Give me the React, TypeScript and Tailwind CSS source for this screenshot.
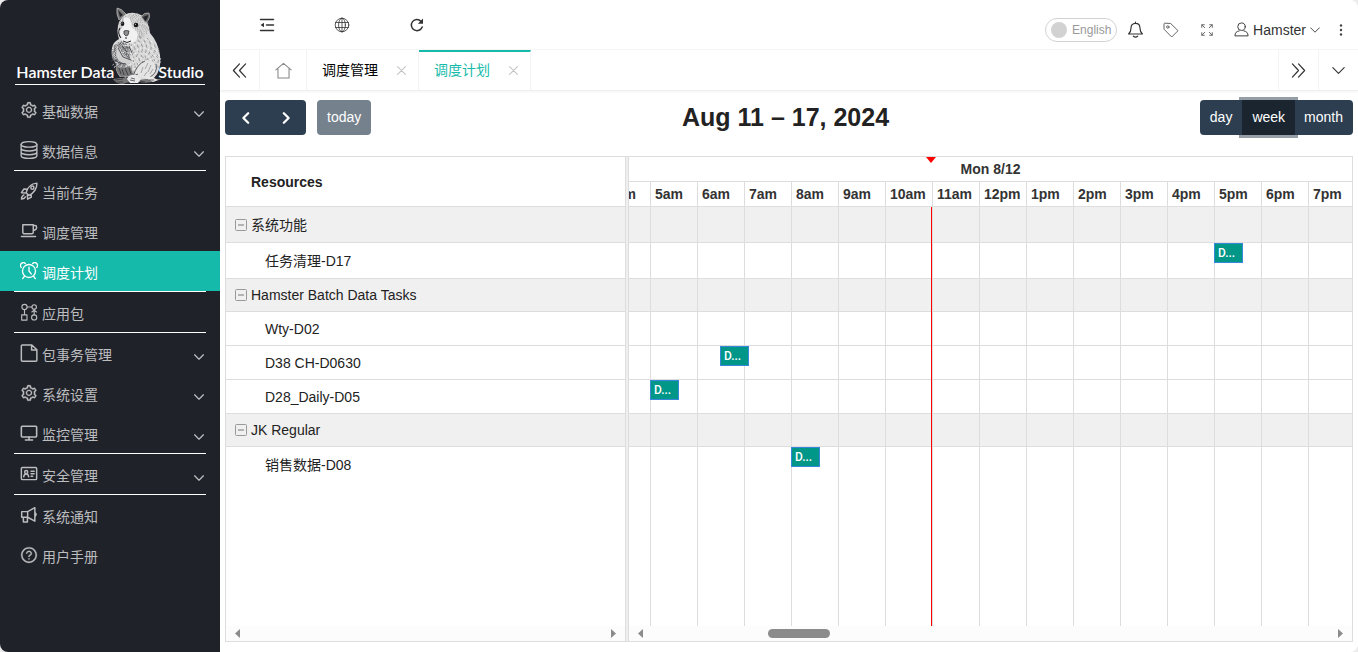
import { useState } from 'react';
import type { ReactNode } from 'react';
import { AiOutlineQuestionCircle, AiOutlineSetting } from 'react-icons/ai';

type IconProps = {
  children: ReactNode;
  className?: string;
  width?: number;
};

type MenuItem = {
  label: string;
  icon: ReactNode;
  expandable?: boolean;
  active?: boolean;
};

type Row = {
  name: string;
  group?: boolean;
  height: string;
  event?: { hour: number; half?: boolean; title: string };
};

const Icon = ({ children, className = 'size-[18px]', width = 1.2 }: IconProps) => (
  <svg
    viewBox="0 0 16 16"
    fill="none"
    stroke="currentColor"
    strokeWidth={width}
    strokeLinecap="round"
    strokeLinejoin="round"
    className={className}
    aria-hidden="true"
  >
    {children}
  </svg>
);

const GearIcon = () => (
  <AiOutlineSetting className="size-[18px]" stroke="currentColor" strokeWidth={16} />
);

const menu: MenuItem[][] = [
  [
    { label: '基础数据', icon: <GearIcon />, expandable: true },
    {
      label: '数据信息',
      expandable: true,
      icon: (
        <Icon>
          <ellipse cx="8" cy="3" rx="7" ry="2.4" />
          <path d="M1 3v10c0 1.3 3.1 2.4 7 2.4s7-1.1 7-2.4V3M1 6.5c0 1.3 3.1 2.4 7 2.4s7-1.1 7-2.4M1 9.8c0 1.3 3.1 2.4 7 2.4s7-1.1 7-2.4" />
        </Icon>
      ),
    },
  ],
  [
    {
      label: '当前任务',
      icon: (
        <Icon width={1.3}>
          <path d="M5.500 9.500C6.500 5 9.500 1.500 15 1c.2 5-2.800 8.500-7 11zM6.300 6.500L3.500 6.200 1.300 9.500l4.200.3M9.800 10.800l.3 2.700-3.300 1.800L6.500 11.500M3.500 11.500q-2 .8-2.200 3.700 2.800-.2 3.500-2" />
          <circle cx="11" cy="5" r="1.400" />
        </Icon>
      ),
    },
    {
      label: '调度管理',
      icon: (
        <Icon width={1.3}>
          <path d="M2.500 2.500h9.300v6.700a1.300 1.300 0 0 1-1.300 1.300H3.800a1.300 1.300 0 0 1-1.300-1.300zM11.800 3.200h1.600q1.300 0 1.300 1.300v.8q0 1.600-2.900 2.200M1.300 12.800h12.500" />
        </Icon>
      ),
    },
    {
      label: '调度计划',
      active: true,
      icon: (
        <Icon>
          <circle cx="8" cy="8" r="5.8" />
          <path d="M8 4.500V8l2 2.600M1.100 4.800A2.500 2.500 0 0 1 4.700 1.300M14.900 4.800a2.500 2.500 0 0 0-3.600-3.500M4 12.500l-1.600 2.300M12 12.500l1.600 2.300" />
        </Icon>
      ),
    },
  ],
  [
    {
      label: '应用包',
      icon: (
        <Icon width={1}>
          <circle cx="4" cy="3.500" r="2.300" />
          <circle cx="12.600" cy="3.500" r="2" />
          <circle cx="12.600" cy="12.800" r="2.300" />
          <path d="M1.500 10.500h4.700v4.700H1.500zM6.500 3.500h4M4 6v4.500M12.600 5.600v4.800M10.500 8l2.100-1.500L14.700 8" />
        </Icon>
      ),
    },
  ],
  [
    {
      label: '包事务管理',
      expandable: true,
      icon: (
        <Icon width={1.3}>
          <path d="M2 .8h8.500L15 5.200v9.300a.8.8 0 0 1-.8.800H2a.8.800 0 0 1-.8-.8V1.600A.8.800 0 0 1 2 .8zM10.300 1v4.400h4.500" />
        </Icon>
      ),
    },
    { label: '系统设置', icon: <GearIcon />, expandable: true },
    {
      label: '监控管理',
      expandable: true,
      icon: (
        <Icon width={1.4}>
          <rect x="1.200" y="2" width="13.600" height="9.500" rx=".8" />
          <path d="M8 11.500V14M4.800 14.200h6.400" />
        </Icon>
      ),
    },
  ],
  [
    {
      label: '安全管理',
      expandable: true,
      icon: (
        <Icon width={1.3}>
          <rect x="1.200" y="2.200" width="13.600" height="10.800" rx="1" />
          <circle cx="5.500" cy="6.200" r="1.400" />
          <path d="M3.300 10.500q.3-2.500 2.200-2.500t2.200 2.500M9.800 5.500h2.800M9.800 7.700h2.800M9.800 10h1.500" />
        </Icon>
      ),
    },
  ],
  [
    {
      label: '系统通知',
      icon: (
        <Icon width={1.3}>
          <path d="M1.500 5h5.300l6.400-3.500v12L6.800 10H1.500zM6.800 5v5M3 10v4.200h3.600V10M13.500 6q1.600 1.300 0 3" />
        </Icon>
      ),
    },
    {
      label: '用户手册',
      icon: <AiOutlineQuestionCircle className="size-[18px]" stroke="currentColor" strokeWidth={16} />,
    },
  ],
];

const rows: Row[] = [
  { name: '系统功能', group: true, height: 'h-[36px]' },
  { name: '任务清理-D17', height: 'h-[36px]', event: { hour: 17, title: 'D...' } },
  { name: 'Hamster Batch Data Tasks', group: true, height: 'h-[33px]' },
  { name: 'Wty-D02', height: 'h-[34px]' },
  { name: 'D38 CH-D0630', height: 'h-[34px]', event: { hour: 6, half: true, title: 'D...' } },
  { name: 'D28_Daily-D05', height: 'h-[34px]', event: { hour: 5, title: 'D...' } },
  { name: 'JK Regular', group: true, height: 'h-[33px]' },
  { name: '销售数据-D08', height: 'h-[36px]', event: { hour: 8, title: 'D...' } },
];

const hours = Array.from({ length: 16 }, (_, i) => i + 4);

const hourLabel = (h: number) => `${h > 12 ? h - 12 : h}${h < 12 ? 'am' : 'pm'}`;

// short strokes spread over an ellipse, in a sunflower pattern
const strokes = (n: number, cx: number, cy: number, rx: number, ry: number) =>
  Array.from({ length: n }, (_, i) => {
    const a = i * 2.39996;
    const r = Math.sqrt((i + 0.5) / n);
    const x = cx + Math.cos(a) * r * rx;
    const y = cy + Math.sin(a) * r * ry;
    const dx = (x - cx) * 0.06 + ((i * 7) % 5) * 0.2 - 0.4;
    return `M${x.toFixed(1)} ${y.toFixed(1)}l${dx.toFixed(1)} ${(1 + (i % 3) * 0.5).toFixed(1)}`;
  });

const fur = strokes(460, 134, 57, 24, 22);
const headFur = strokes(150, 132, 26, 15, 13);
const chestFur = strokes(150, 119, 54, 9, 13);

const Hamster = () => (
  <svg viewBox="108 6 54 78" className="h-[78px] w-[54px]" aria-hidden="true">
    <path d="M111 79q12-2 22-1t27 1l-6 2q-10 3-16 1t-14 1-13-4z" fill="#777" />
    <path
      d="M122 15Q131 10 141 16Q147 23 148 33Q156 42 158 55Q160 70 152 78L136 80L128 77L118 77Q113 71 114 64Q108 57 110 48Q111 42 117 39Q114 31 117 22z"
      fill="#dadada"
    />
    <g fill="none" strokeWidth=".6">
      <path d={fur.filter((_, i) => i % 2 === 0).join('')} stroke="#6b6b6b" />
      <path d={fur.filter((_, i) => i % 3 === 0).join('')} stroke="#fff" strokeWidth=".8" />
      <path d={headFur.join('')} stroke="#8a8a8a" />
      <path d={chestFur.join('')} stroke="#3d3f45" strokeWidth=".7" />
    </g>
    <path d="M117 20q-3-6-2-12 4 0 9 6l-3 3z" fill="#777" stroke="#ccc" strokeWidth=".6" />
    <path d="M116 10l5 5-3 2z" fill="#24262c" />
    <path d="M139 17q3-5 8-4 2 5-3 10z" fill="#666" stroke="#ccc" strokeWidth=".6" />
    <path d="M141 17l5-2q0 4-3 6z" fill="#24262c" />
    <path d="M122 18q3-2 6 1l2 8 5 5q2 8-4 11h-8q-7-3-6-11l4-5z" fill="#f1f1f1" />
    <ellipse cx="120.500" cy="23.700" rx="1.800" ry="2.200" fill="#17181c" />
    <circle cx="134" cy="25" r="2.300" fill="#17181c" />
    <circle cx="120" cy="23" r=".5" fill="#fff" />
    <circle cx="133.400" cy="24.200" r=".5" fill="#fff" />
    <path d="M118 28q-3 5 1 10" fill="none" stroke="#24262c" strokeWidth="1.100" />
    <path d="M122 31q2-1 5 0l-1 4-2 1-2-2z" fill="#8f8f8f" stroke="#33353b" strokeWidth=".8" />
    <path d="M124 37v2m-3 2q4 3 8 0" fill="none" stroke="#24262c" strokeWidth="1" />
    <path d="M115 46q5 5 7 10l7 4q1 4-5 4-8-2-10-9z" fill="#d0d0d0" />
    <path d="M116 48l5 9 8 3M112 60l6 3 6 1M120 46l5 6M127 46l3 7" fill="none" stroke="#33353b" strokeWidth=".8" />
    <path d="M114 66q6 3 14 0l4 10-13 1q-5-4-5-11z" fill="#777" />
    <path d="M117 68l2 6M120 69l2 6M123 68l3 7M127 68l2 6" stroke="#33353b" strokeWidth=".8" />
    <path d="M133 76q1-13 11-15 9-2 10 8 0 8-9 10z" fill="#e4e4e4" />
    <path d="M143 61q-8 3-12 15M154 64q2 9-6 13M136 74l-7 3" fill="none" stroke="#4a4c52" strokeWidth=".9" />
    <path d="M146 63l-3 6M149 65l-3 7M151 69l-3 5M141 67l-2 6M145 72l-3 4" stroke="#888" strokeWidth=".7" />
    <path d="M125 79q2-5 9-4l5 4-3 4h-8zM144 78q4-3 8 0l4 2-5 2z" fill="#e8e8e8" />
    <path d="M128 80l5 1M129 78l4 1M147 80h5M113 80l8-1M115 82h6M138 81l5 1" stroke="#2b2d33" strokeWidth=".7" />
  </svg>
);

const Chevron = ({ className, width = 1.4 }: { className: string; width?: number }) => (
  <Icon className={className} width={width}>
    <path d="M1 4.500l7 7 7-7" />
  </Icon>
);

const Sidebar = () => (
  <aside className="w-[220px] shrink-0 bg-[#20222a]">
    <div className="h-[90px] px-[15px] pt-[6px]">
      <div className="flex items-end justify-center border-b border-white font-[Lato] text-[16px] leading-5 font-semibold text-white">
        <span className="pb-[2px] whitespace-nowrap">Hamster Data</span>
        <span className="-mr-[6px] -ml-1">
          <Hamster />
        </span>
        <span className="pb-[2px]">Studio</span>
      </div>
    </div>
    <nav>
      {menu.map((group, g) => (
        <div key={g}>
          {g > 0 && <hr className="mx-[14px] border-t border-white" />}
          {group.map((item) => (
            <a
              key={item.label}
              href="#"
              className={`flex h-10 items-center pr-4 pl-5 text-[14px] ${
                item.active ? 'bg-[#16baaa] text-white' : 'text-[#bcbdbf]'
              }`}
            >
              <span className="flex w-[22px] items-center">{item.icon}</span>
              <span className="pt-1">{item.label}</span>
              {item.expandable && <Chevron className="mt-2 ml-auto size-[10px]" width={2} />}
            </a>
          ))}
        </div>
      ))}
    </nav>
  </aside>
);

const TopBar = () => {
  const [english, setEnglish] = useState(false);

  return (
    <header className="flex h-[50px] justify-between border-b border-[#f6f6f6] text-[#333]">
      <div className="flex pl-[9px]">
        <button aria-label="Fold menu" className="flex w-[75px] items-center justify-center">
          <Icon className="size-[16px]" width={1.5}>
            <path d="M1.500 2.500h13M7.500 8h7M1.500 13.500h13" />
            <path d="M1.500 8L5 5.800v4.400z" fill="currentColor" stroke="none" />
          </Icon>
        </button>
        <button aria-label="Website" className="flex w-[75px] items-center justify-center">
          <Icon className="size-[16px]" width={0.8}>
            <circle cx="8" cy="8" r="6.800" />
            <ellipse cx="8" cy="8" rx="3.400" ry="6.800" />
            <path d="M8 1v14M1.500 5.500h13M1.500 10.500h13" />
          </Icon>
        </button>
        <button aria-label="Refresh" className="flex w-[75px] items-center justify-center">
          <Icon className="size-[16px]" width={1.5}>
            <path d="M13.200 10A5.600 5.600 0 1 1 12 4.200" />
            <path d="M14 1.500v5.300H8.800z" fill="currentColor" stroke="none" />
          </Icon>
        </button>
      </div>
      <div className="flex items-center pt-[10px]">
        <label className="flex h-6 w-[72px] items-center gap-[5px] rounded-full border border-[#d2d2d2] pl-[5px] text-[12px] text-[#999]">
          <input
            type="checkbox"
            className="sr-only"
            checked={english}
            onChange={(e) => setEnglish(e.target.checked)}
          />
          <span className="size-4 rounded-full bg-[#d2d2d2]" />
          English
        </label>
        <button aria-label="Messages" className="flex w-9 justify-center">
          <Icon className="size-[17px]" width={1.1}>
            <path d="M8 2.200c-3 0-4.200 2-4.200 4.300 0 3-.8 4.300-2.300 5.700h13c-1.500-1.400-2.300-2.700-2.300-5.700C12.200 4.200 11 2.200 8 2.200zM8 1v1.200M6 14.300q2 1.600 4 0" />
          </Icon>
        </button>
        <button aria-label="Theme" className="flex w-9 justify-center text-[#666]">
          <Icon className="size-[16px]" width={1}>
            <path d="M1 2v5.200L8.700 15 15 8.700 7.700 1.500 2 1.200z" />
            <circle cx="4.800" cy="5" r="1.200" />
          </Icon>
        </button>
        <button aria-label="Full screen" className="flex w-9 justify-center text-[#666]">
          <Icon className="size-[12px]" width={1.3}>
            <path d="M1 4.500V1h3.500M1.200 1.200L5 5M11.500 1H15v3.500M14.800 1.200L11 5M1 11.500V15h3.500M1.200 14.800L5 11M15 11.500V15h-3.500M14.800 14.800L11 11" />
          </Icon>
        </button>
        <button className="ml-[9px] flex items-center gap-1 text-[14px]">
          <Icon className="size-[15px]" width={1}>
            <circle cx="8" cy="5" r="4" />
            <path d="M5.500 9.500Q1 10 1 14.800h14q0-4.800-4.500-5.300" />
          </Icon>
          <span className="pt-[2px]">Hamster</span>
          <Chevron className="size-[10px]" />
        </button>
        <button aria-label="More" className="flex w-[38px] justify-center pl-1">
          <svg viewBox="0 0 4 14" className="h-[14px] w-1" fill="#444" aria-hidden="true">
            <circle cx="2" cy="2.500" r="1.200" />
            <circle cx="2" cy="7" r="1.200" />
            <circle cx="2" cy="11.500" r="1.200" />
          </svg>
        </button>
      </div>
    </header>
  );
};

const Tab = ({ label, active }: { label: string; active?: boolean }) => (
  <div
    className={`flex w-[112px] items-center justify-between border-t-2 border-r border-r-[#f3f3f3] pr-3 pb-[2px] pl-[15px] text-[14px] ${
      active ? 'border-t-[#16baaa] text-[#16baaa]' : 'border-t-transparent text-black'
    }`}
  >
    <a href="#">{label}</a>
    <button aria-label={`Close ${label}`} className="text-[#c2c2c2]">
      <Icon className="size-[9px]" width={1.8}>
        <path d="M1 1l14 14M15 1L1 15" />
      </Icon>
    </button>
  </div>
);

const TabBar = () => (
  <div className="flex h-[41px] border-b border-[#f0f0f0] text-[#333] shadow-[0_1px_2px_rgba(0,0,0,0.05)]">
    <button aria-label="Previous tabs" className="flex w-10 items-center justify-center border-r border-[#f3f3f3]">
      <Icon className="size-[15px]" width={1.3}>
        <path d="M8 1L1.500 8 8 15M14.500 1L8 8l6.500 7" />
      </Icon>
    </button>
    <button aria-label="Home" className="flex w-[47px] items-center justify-center border-r border-[#f3f3f3] text-[#888]">
      <Icon className="size-[17px]" width={1}>
        <path d="M.8 7.500L8 1.200l7.200 6.300M2.800 6v9h10.400V6" />
      </Icon>
    </button>
    <Tab label="调度管理" />
    <Tab label="调度计划" active />
    <button aria-label="Next tabs" className="ml-auto flex w-10 items-center justify-center border-l border-[#f3f3f3]">
      <Icon className="size-[15px]" width={1.3}>
        <path d="M1.500 1L8 8l-6.500 7M8 1l6.500 7L8 15" />
      </Icon>
    </button>
    <button aria-label="Tab menu" className="flex w-10 items-center justify-center border-l border-[#f3f3f3]">
      <Chevron className="size-[13px]" />
    </button>
  </div>
);

const Toolbar = () => (
  <div className="flex h-[35px] items-stretch justify-between text-[14px]">
    <div className="flex gap-[11px] text-white">
      <div className="flex rounded bg-[#2c3e50]">
        <button aria-label="prev" className="flex w-[41px] items-center justify-center">
          <Icon className="size-[14px]" width={2.6}>
            <path d="M10.500 2.500L5 8l5.500 5.500" />
          </Icon>
        </button>
        <button aria-label="next" className="flex w-10 items-center justify-center">
          <Icon className="size-[14px]" width={2.6}>
            <path d="M5.500 2.500L11 8l-5.500 5.500" />
          </Icon>
        </button>
      </div>
      <button className="rounded bg-[#2c3e50] px-[10px] opacity-65" disabled>
        today
      </button>
    </div>
    <h2 className="text-[25px] leading-[35px] font-bold text-[#222]">Aug 11 – 17, 2024</h2>
    <div className="flex text-white">
      <button className="rounded-l bg-[#2c3e50] px-[10px]">day</button>
      <button className="z-10 bg-[#1a252f] px-[10px] shadow-[0_0_0_3px_rgba(44,62,80,0.5)]">week</button>
      <button className="rounded-r bg-[#2c3e50] pr-[10px] pl-[9px]">month</button>
    </div>
  </div>
);

const Arrow = ({ right }: { right?: boolean }) => (
  <svg viewBox="0 0 5 9" className="h-[9px] w-[5px]" fill="#8b8b8b" aria-hidden="true">
    <path d={right ? 'M0 0l5 4.500L0 9z' : 'M5 0L0 4.500 5 9z'} />
  </svg>
);

const ScrollStrip = ({ thumb }: { thumb?: boolean }) => (
  <div className="flex h-[15px] shrink-0 items-center bg-[#fcfcfc] px-[9px]">
    <Arrow />
    <div className="flex-1">
      {thumb && <div className="ml-[18%] h-[9px] w-[62px] rounded-full bg-[#8b8b8b]" />}
    </div>
    <Arrow right />
  </div>
);

const ResourcePane = () => (
  <div className="flex w-[400px] shrink-0 flex-col border-r border-[#ddd]">
    <table className="w-full border-separate border-spacing-0 text-left text-[14px] text-[#222]">
      <thead>
        <tr>
          <th className="h-[50px] border-b border-[#ddd] pt-px pl-[25px] font-bold">Resources</th>
        </tr>
      </thead>
      <tbody>
        {rows.map((row, i) => (
          <tr key={row.name}>
            <td
              className={`${row.height} ${i < rows.length - 1 ? 'border-b border-[#ddd]' : ''} ${
                row.group ? 'bg-[#f0f0f0] pl-[9px]' : 'pl-[39px]'
              }`}
            >
              <div className="flex items-center gap-1 leading-5">
                {row.group && (
                  <button aria-label={`Collapse ${row.name}`}>
                    <svg viewBox="0 0 12 12" className="size-3" fill="none" aria-hidden="true">
                      <rect x=".5" y=".5" width="11" height="11" rx="1" stroke="#999" />
                      <path d="M3 6h6" stroke="#777" />
                    </svg>
                  </button>
                )}
                {row.name}
              </div>
            </td>
          </tr>
        ))}
      </tbody>
    </table>
    <div className="flex-1" />
    <ScrollStrip />
  </div>
);

const TimelinePane = () => (
  <div className="relative flex min-w-0 flex-1 flex-col overflow-hidden">
    <div className="h-[25px] shrink-0 border-b border-[#ddd] text-center text-[14px] leading-6 font-bold text-[#333]">
      Mon 8/12
    </div>
    <div className="-ml-[26px] flex flex-1 flex-col">
      <table className="w-full min-w-[752px] table-fixed border-separate border-spacing-0">
        <thead>
          <tr>
            {hours.map((h) => (
              <th
                key={h}
                className="h-[25px] border-b border-l border-[#ddd] pl-1 text-left text-[14px] leading-5 font-bold text-[#333]"
              >
                {hourLabel(h)}
              </th>
            ))}
          </tr>
        </thead>
        <tbody>
          {rows.map((row, i) => (
            <tr key={row.name} className={row.group ? 'bg-[#f0f0f0]' : ''}>
              {hours.map((h) => (
                <td
                  key={h}
                  className={`${row.height} relative border-l border-[#ddd] ${
                    i < rows.length - 1 ? 'border-b' : ''
                  }`}
                >
                  {row.event?.hour === h && (
                    <a
                      href="#"
                      className={`absolute top-0 z-10 h-5 w-[29px] border border-[#3788d8] bg-[#009688] pl-[3px] font-[Roboto] text-[12px] leading-[18px] font-medium text-white ${
                        row.event.half ? 'left-[22px]' : '-left-px'
                      }`}
                    >
                      {row.event.title}
                    </a>
                  )}
                </td>
              ))}
            </tr>
          ))}
        </tbody>
      </table>
      <div className="flex flex-1">
        {hours.map((h) => (
          <div key={h} className="min-w-[47px] flex-1 border-l border-[#ddd]" />
        ))}
      </div>
    </div>
    {/* now indicator */}
    <div className="absolute top-0 left-[297px] border-x-5 border-t-6 border-x-transparent border-t-[red]" />
    <div className="absolute top-[50px] bottom-[15px] left-[302px] w-px bg-[red]" />
    <ScrollStrip thumb />
  </div>
);

export default function App() {
  return (
    <div className="bg-[#ececec] font-['Liberation_Sans','Noto_Sans_CJK_SC',sans-serif]">
      <div className="flex min-h-screen overflow-hidden rounded-lg bg-white">
        <Sidebar />
        <div className="flex min-w-0 flex-1 flex-col">
          <TopBar />
          <TabBar />
          <main className="flex flex-1 flex-col gap-[21px] px-[5px] pt-[9px] pb-[10px]">
            <Toolbar />
            <div className="flex flex-1 border border-[#ddd]">
              <ResourcePane />
              <div className="w-[3px] shrink-0 border-r border-[#ddd] bg-[#efefef]" />
              <TimelinePane />
            </div>
          </main>
        </div>
      </div>
    </div>
  );
}
